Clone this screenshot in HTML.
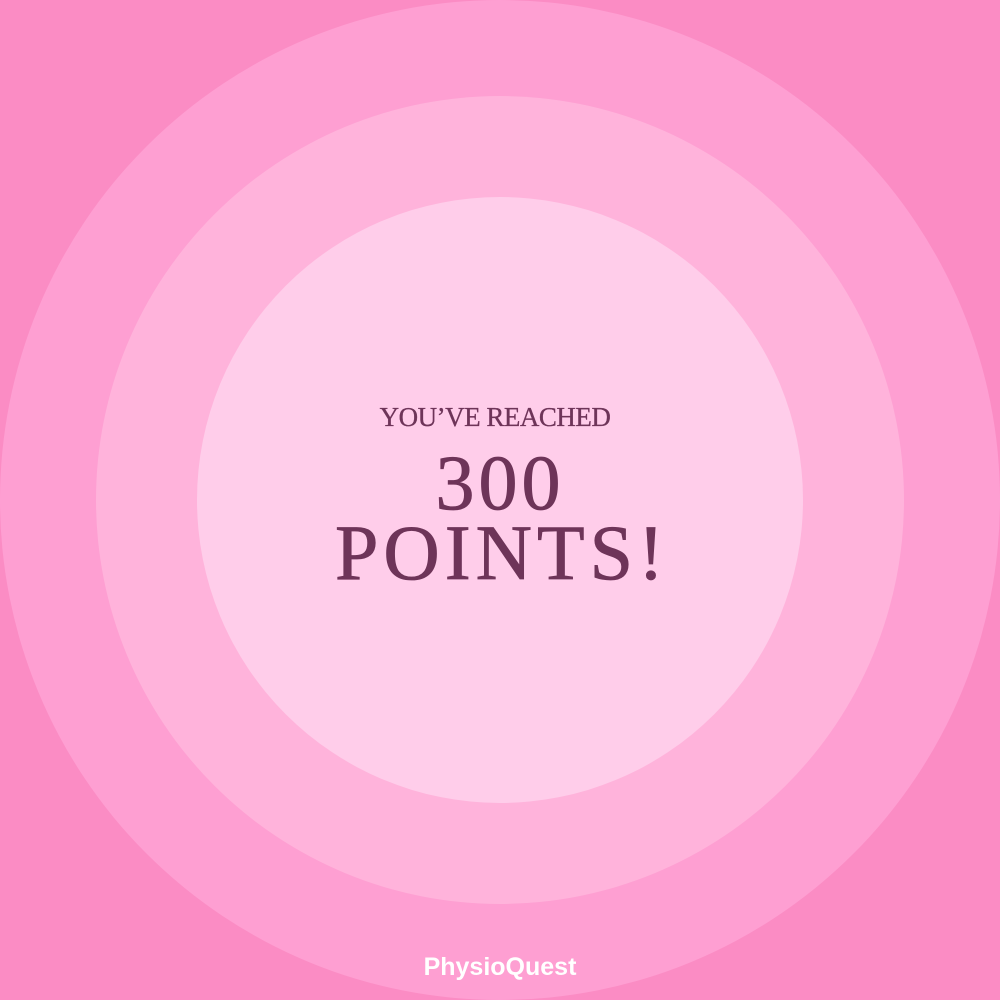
<!DOCTYPE html>
<html><head><style>
html,body{margin:0;padding:0}
body{width:1000px;height:1000px;background:#fb8cc4;position:relative;overflow:hidden}
.c{position:absolute;border-radius:50%}
.t{position:absolute;left:0;width:1000px;text-align:center;font-family:"Liberation Serif",serif;color:#6e3459;white-space:nowrap;-webkit-text-stroke:0.8px #6e3459}
</style></head><body>
<div class="c" style="left:0;top:0;width:1000px;height:1000px;background:#fe9fd2"></div>
<div class="c" style="left:96px;top:96px;width:808px;height:808px;background:#ffb3db"></div>
<div class="c" style="left:197px;top:197px;width:606px;height:606px;background:#ffcdea"></div>
<div class="t" style="left:-5px;top:400px;font-size:27px;line-height:34px;letter-spacing:-0.5px;-webkit-text-stroke:0.3px #6e3459">YOU’VE REACHED</div>
<div class="t" style="top:440px;font-size:78px;line-height:86px;letter-spacing:4px">300</div>
<div class="t" style="left:2px;top:510px;font-size:78px;line-height:86px;letter-spacing:5px">POINTS!</div>
<div class="t" style="top:950px;font-family:'Liberation Sans',sans-serif;font-weight:bold;color:#fff;-webkit-text-stroke:0;font-size:25px;line-height:34px">PhysioQuest</div>
</body></html>
